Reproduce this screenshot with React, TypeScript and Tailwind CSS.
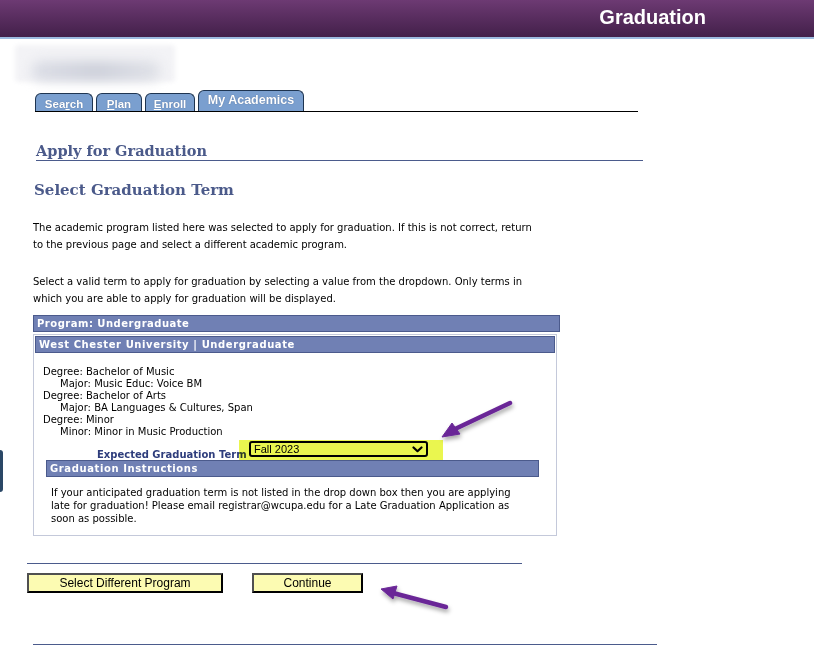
import React from "react";

const verdana = { fontFamily: '"DejaVu Sans", Verdana, sans-serif' };

function Tab({ label, u, active }: { label: string; u?: number; active?: boolean }) {
  const pre = u !== undefined ? label.slice(0, u) : label;
  const ch = u !== undefined ? label.slice(u, u + 1) : "";
  const post = u !== undefined ? label.slice(u + 1) : "";
  return (
    <div
      className={`flex items-end justify-center rounded-t-[6px] border border-b-0 border-[#1e3450] bg-[#7a9fcf] text-white font-bold ${
        active ? "h-[21px] pb-[4px] text-[12.5px]" : "h-[18px] pb-[0px] text-[11.5px]"
      }`}
      style={{ fontFamily: '"Liberation Sans", Arial, sans-serif', textShadow: "0 0 1px rgba(30,50,90,0.6)" }}
    >
      <span className="leading-[14px]">
        {pre}
        {ch && <span className="underline">{ch}</span>}
        {post}
      </span>
    </div>
  );
}

export default function App() {
  return (
    <div className="relative w-[814px] h-[656px] overflow-hidden bg-white">
      {/* header */}
      <div className="h-[39px] border-b-2 border-[#9dbbe0] bg-gradient-to-b from-[#6d3a73] to-[#43204a] flex items-center justify-end pr-[108px]">
        <span
          className="text-white text-[20px] font-bold leading-none mt-[-3px]"
          style={{ fontFamily: '"Liberation Sans", Arial, sans-serif' }}
        >
          Graduation
        </span>
      </div>

      {/* blurred name */}
      <div className="ml-[15px] mt-[6px] h-[37px] w-[160px] relative">
        <div className="absolute inset-0 rounded-[4px] bg-[#f3f3f6] blur-[2px]" />
        <div className="absolute left-[16px] top-[16px] h-[20px] w-[130px] rounded-full bg-gradient-to-r from-[#dcdee6] via-[#cdd0da] to-[#e0e2e8] blur-[6px]" />
      </div>

      {/* tabs */}
      <div className="ml-[35px] mt-[9px] w-[603px] h-[21px] border-b border-black flex items-end gap-[3px]">
        <div className="w-[58px]"><Tab label="Search" u={3} /></div>
        <div className="w-[46px]"><Tab label="Plan" u={0} /></div>
        <div className="w-[50px]"><Tab label="Enroll" u={0} /></div>
        <div className="w-[106px]"><Tab label="My Academics" active /></div>
      </div>

      {/* Apply for Graduation */}
      <div className="ml-[36px] mt-[29px] w-[607px] border-b-[1.5px] border-[#4b5b8c]">
        <div
          className="text-[14.5px] leading-[19px] font-bold text-[#4b5a8a]"
          style={{ fontFamily: '"DejaVu Serif", Georgia, serif' }}
        >
          Apply for Graduation
        </div>
      </div>

      <div
        className="ml-[34px] mt-[18px] text-[15px] leading-[22px] font-bold text-[#4b5a8a]"
        style={{ fontFamily: '"DejaVu Serif", Georgia, serif' }}
      >
        Select Graduation Term
      </div>

      <div className="ml-[33px] mt-[18px] text-[10px] leading-[17px] text-black whitespace-nowrap" style={verdana}>
        <p>The academic program listed here was selected to apply for graduation. If this is not correct, return</p>
        <p>to the previous page and select a different academic program.</p>
        <p className="mt-[20px]">Select a valid term to apply for graduation by selecting a value from the dropdown. Only terms in</p>
        <p>which you are able to apply for graduation will be displayed.</p>
      </div>

      {/* Program bar */}
      <div
        className="ml-[33px] mt-[8px] w-[527px] h-[17px] border border-[#4b5a8c] bg-[#7080b4] text-white font-bold text-[10px] leading-[15px] pl-[3px] tracking-[0.5px]"
        style={verdana}
      >
        Program: Undergraduate
      </div>

      {/* Box */}
      <div className="ml-[33px] mt-[2px] w-[524px] border border-[#c4c9da] p-[1px] pb-[10px]" style={verdana}>
        <div className="h-[17px] border border-[#4b5a8c] bg-[#7080b4] text-white font-bold text-[10px] leading-[15px] pl-[3px] tracking-[0.6px]">
          West Chester University | Undergraduate
        </div>
        <div className="pl-[8px] mt-[13px] text-[10px] leading-[12px] text-black">
          <div>Degree: Bachelor of Music</div>
          <div className="pl-[17px]">Major: Music Educ: Voice BM</div>
          <div>Degree: Bachelor of Arts</div>
          <div className="pl-[17px]">Major: BA Languages &amp; Cultures, Span</div>
          <div>Degree: Minor</div>
          <div className="pl-[17px]">Minor: Minor in Music Production</div>
        </div>
        <div className="relative flex items-start h-[16px] mt-[3px] ml-[62px]">
          <span className="w-[152px] shrink-0 whitespace-nowrap text-[10px] leading-[12px] font-bold text-[#2e3d7c] mt-[8px]">
            Expected Graduation Term
          </span>
          <div className="w-[179px] shrink-0 h-[16px] border-2 border-black rounded-[3px] flex items-center justify-between pl-[3px] pr-[3px]">
            <span className="text-[11px] leading-none text-black" style={{ fontFamily: '"Liberation Sans", Arial, sans-serif' }}>
              Fall 2023
            </span>
            <svg width="11" height="7" viewBox="0 0 11 7">
              <path d="M1.5 1.5 L5.5 5.2 L9.5 1.5" stroke="black" strokeWidth="2.2" fill="none" strokeLinecap="round" strokeLinejoin="round" />
            </svg>
          </div>
          <div className="absolute left-[142px] top-[-1px] w-[204px] h-[20px] bg-[#e8f53c] mix-blend-multiply opacity-90" />
        </div>
        <div className="ml-[11px] mt-[3px] w-[493px] h-[17px] border border-[#4b5a8c] bg-[#7080b4] text-white font-bold text-[10px] leading-[15px] pl-[3px] tracking-[0.6px]">
          Graduation Instructions
        </div>
        <div className="ml-[16px] mt-[9px] text-[10px] leading-[13px] text-black whitespace-nowrap">
          <div>If your anticipated graduation term is not listed in the drop down box then you are applying</div>
          <div>late for graduation! Please email registrar@wcupa.edu for a Late Graduation Application as</div>
          <div>soon as possible.</div>
        </div>
      </div>

      {/* line + buttons */}
      <div className="ml-[27px] mt-[27px] w-[495px] border-t-[1.5px] border-[#4b5b8c]" />
      <div className="ml-[27px] mt-[9px] flex gap-[29px]">
        {["Select Different Program", "Continue"].map((t, i) => (
          <div
            key={t}
            className={`h-[20px] flex items-center justify-center bg-[#fcfbb2] border-2 border-[#505050] border-r-black border-b-black text-[12px] text-black ${
              i === 0 ? "w-[196px]" : "w-[111px]"
            }`}
            style={{ fontFamily: '"Liberation Sans", Arial, sans-serif' }}
          >
            {t}
          </div>
        ))}
      </div>
      <div className="ml-[33px] mt-[51px] w-[624px] border-t-[1.5px] border-[#4b5b8c]" />

      {/* left edge handle */}
      <div className="absolute left-[-8px] top-[450px] w-[11px] h-[42px] rounded-[3px] bg-[#2a4766]" />

      {/* annotation arrows */}
      <svg className="absolute left-0 top-0 pointer-events-none" width="814" height="656" viewBox="0 0 814 656">
        <defs>
          <filter id="sh" x="-20%" y="-20%" width="140%" height="140%">
            <feDropShadow dx="1" dy="3" stdDeviation="2" floodColor="#000" floodOpacity="0.35" />
          </filter>
        </defs>
        <g filter="url(#sh)" fill="#6a2797" stroke="#6a2797">
          <path d="M510 403 L455 429" strokeWidth="4.5" strokeLinecap="round" fill="none" />
          <path d="M442 437 L452 423 L460 434 Z" strokeWidth="1" strokeLinejoin="round" />
          <path d="M446 607 L393 593" strokeWidth="4.5" strokeLinecap="round" fill="none" />
          <path d="M381 589 L397 586 L393 599 Z" strokeWidth="1" strokeLinejoin="round" />
        </g>
      </svg>
    </div>
  );
}
